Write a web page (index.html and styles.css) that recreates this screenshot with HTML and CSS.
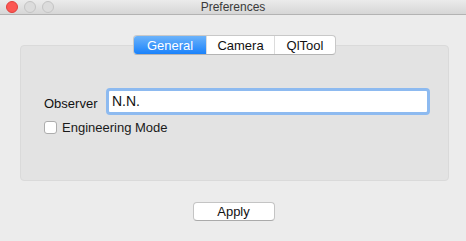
FILE: index.html
```html
<!DOCTYPE html>
<html lang="en">
<head>
  <meta charset="UTF-8" />
  <title>Preferences</title>
  <link rel="stylesheet" href="styles.css">
</head>
<body>
  <div class="window">
    <div class="titlebar">
      <div class="lights">
        <span class="light red"></span>
        <span class="light"></span>
        <span class="light"></span>
      </div>
      <div class="title">Preferences</div>
    </div>
    <div class="content">
      <div class="tabs">
        <div class="tab active">General</div>
        <div class="tab">Camera</div>
        <div class="tab">QlTool</div>
      </div>
      <div class="panel">
        <div class="row">
          <label for="observer">Observer</label>
          <input type="text" id="observer" value="N.N.">
        </div>
        <div class="check">
          <span class="box"></span>
          <span>Engineering Mode</span>
        </div>
      </div>
      <div class="actions">
        <button class="apply">Apply</button>
      </div>
    </div>
  </div>
</body>
</html>
```

FILE: styles.css
```css
* { box-sizing: border-box; margin: 0; padding: 0; }
body {
  font-family: "Liberation Sans", Arial, sans-serif;
  font-size: 13px;
  color: #1a1a1a;
  background: #ececec;
  width: 466px;
  height: 241px;
  overflow: hidden;
}
.window { width: 466px; height: 241px; background: #ececec; }
.titlebar {
  height: 15px;
  background: linear-gradient(#ebebeb, #d6d6d6);
  border-bottom: 1px solid #b3b3b3;
  display: flex;
  align-items: flex-start;
  position: relative;
}
.lights { display: flex; gap: 6px; padding: 1px 0 0 6px; }
.light {
  width: 12px; height: 12px;
  border-radius: 50%;
  background: #dcdcdc;
  border: 1px solid #c4c4c4;
}
.light.red { background: #fc5753; border-color: #e0403c; }
.title {
  position: absolute; left: 0; right: 0; top: 0;
  text-align: center;
  font-size: 12px;
  line-height: 14px;
  color: #3a3a3a;
}
.content { padding-top: 20px; }
.tabs {
  display: flex;
  margin-left: 133px;
  width: 203px;
  height: 20px;
  background: #fff;
  border: 1px solid #c8c8c8;
  border-bottom-color: #b4b4b4;
  border-radius: 4px;
  overflow: hidden;
  position: relative;
  z-index: 1;
  margin-bottom: -10px;
}
.tab {
  display: flex; align-items: center; justify-content: center;
  font-size: 13px;
  color: #111;
  border-left: 1px solid #dcdcdc;
}
.tab:nth-child(1) { width: 72px; border-left: none; }
.tab:nth-child(2) { width: 68px; }
.tab:nth-child(3) { flex: 1; }
.tab.active {
  background: linear-gradient(#6cb3fa, #1a82fb);
  color: #fff;
}
.panel {
  margin-left: 20px;
  width: 429px;
  height: 136px;
  background: #e3e3e3;
  border: 1px solid #dadada;
  border-radius: 4px;
  padding: 42px 18px 0 23px;
}
.row { display: flex; align-items: center; }
.row label { width: 62px; color: #111; padding-top: 3px; }
.row input {
  width: 324px;
  height: 27px;
  border: 3px solid #8dbaf0;
  border-radius: 4px;
  padding: 0 3px 2px 3px;
  font: inherit;
  font-size: 14px;
  color: #111;
  background: #fff;
  outline: none;
}
.check { display: flex; align-items: center; gap: 5px; margin-top: 5px; }
.box {
  width: 13px; height: 13px;
  background: #fff;
  border: 1px solid #adadad;
  border-radius: 3px;
}
.actions { display: flex; justify-content: center; padding-top: 21px; padding-left: 1px; }
.apply {
  width: 82px; height: 19px;
  background: #fff;
  border: 1px solid #c4c4c4;
  border-bottom-color: #aaa;
  border-radius: 4px;
  font: inherit;
  font-size: 13px;
  color: #111;
}
```
